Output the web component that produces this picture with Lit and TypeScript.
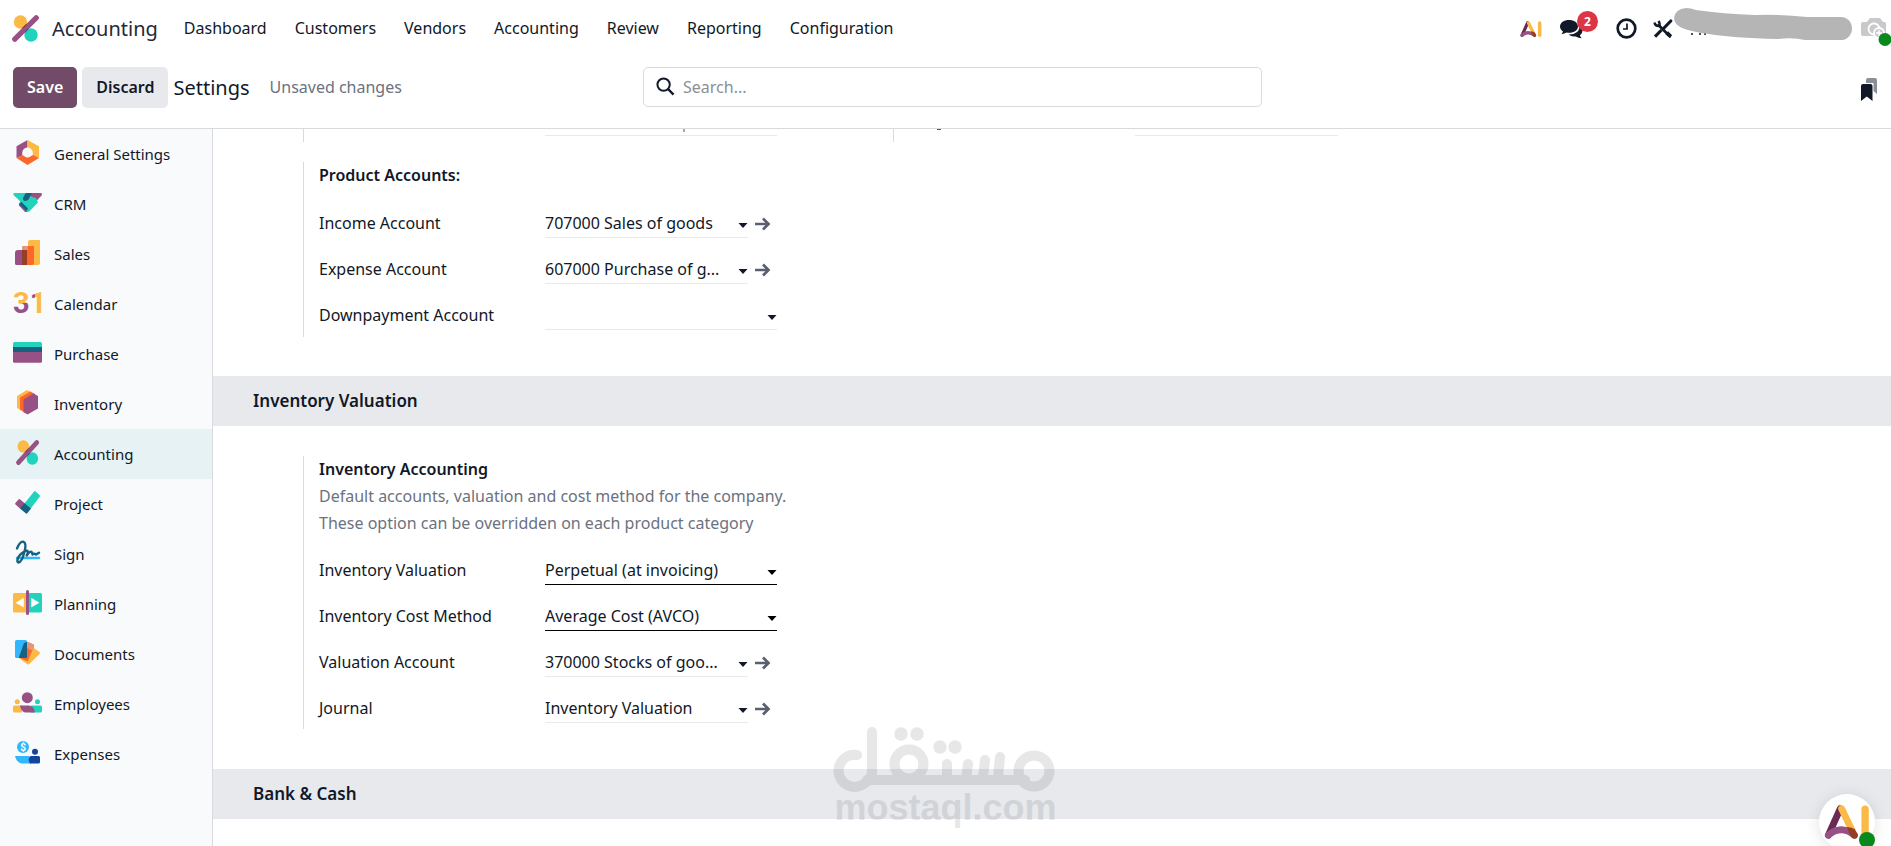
import { LitElement, html, css, svg } from "lit";
import { customElement } from "lit/decorators.js";

const percent = svg`
  <circle cx="8.5" cy="7" r="6.7" fill="#fbb945"/>
  <circle cx="19" cy="20" r="6.7" fill="#21d3bc"/>
  <path d="M2.8 24.2 24.2 2.8" stroke="#985184" stroke-width="5.3" stroke-linecap="round"/>
  <path d="M9.6 13.6 13.6 9.6 14.8 8.8 Q14 12 11.5 13Z" fill="#8c3b2c"/>
  <path d="M12.6 18.2 17 13.6 Q13.5 14.5 12.6 18.2Z" fill="#17607f"/>`;

const aiMark = svg`
  <path d="M3.500 31 15.500 4" stroke="#6a2a55" stroke-width="7" stroke-linecap="round"/>
  <path d="M17 4 30 31" stroke="#fbb945" stroke-width="7" stroke-linecap="round"/>
  <path d="M3.500 31 Q16.500 20 30 31" stroke="#985184" stroke-width="7" stroke-linecap="round" fill="none"/>
  <path d="M22.500 22.500 Q28 23 30.500 25 L33.400 30.500 Q33.500 35 29.500 34.400 Q27 34 25.500 31Z" fill="#953f27"/>
  <path d="M41 4.500V31" stroke="#fbb945" stroke-width="7.500" stroke-linecap="round"/>`;

const apps = [
  { name: "General Settings", art: svg`
    <path d="M14.500 2 3.500 8.200V20L9 17.500 10 12 14.500 10Z" fill="#985184"/>
    <path d="M14.500 2 26 8.200V20L20 17.500 19 12 14.500 10Z" fill="#fbb945"/>
    <path d="M3.500 20 9.500 17 14.500 19.500 20 17 26 20 14.500 27Z" fill="#fc6829"/>
    <circle cx="14.500" cy="14.500" r="5" fill="#f9fafc"/>` },
  { name: "CRM", art: svg`
    <path d="M2 5H17L9 15 1 7.500Q-.8 5 2 5Z" fill="#21d3bc"/>
    <path d="M14 5H27.500Q30 5.500 28.500 7.500L23 13.500Z" fill="#985184"/>
    <path d="M7 14 15 24H12L6 17.500Q5.500 15.500 7 14Z" fill="#985184"/>
    <path d="M16 8 23 10 25 14.500 16.500 23.200Q15 24.500 13.500 23L7 16.500 8 12Z" fill="#21d3bc"/>
    <path d="M8 13.500 15 20.500 13.500 23 6.500 16.500ZM13 5H19L15.500 11.500Q11.500 14.500 10 11.500Q9.500 9.500 13 5Z" fill="#17607f"/>` },
  { name: "Sales", art: svg`
    <path d="M15 4Q15 2 17 2H27V25Q27 27 25 27H15Z" fill="#fbb945"/>
    <path d="M2 15Q2 12 5 12H14V27H3.500Q2 27 2 25.500Z" fill="#985184"/>
    <path d="M9 10Q9 8 11 8H21V25Q21 27 19 27H9Z" fill="#fc6829"/>
    <path d="M9 10Q9 8 11 8H15V12H9Z" fill="#e2977c"/>
    <path d="M9 12H14V27H9Z" fill="#953f27"/>` },
  { name: "Calendar", art: svg`
    <defs>
      <pattern id="date" patternUnits="userSpaceOnUse" x="0" y="0" width="34" height="34">
        <rect width="34" height="34" fill="#fbb945"/>
        <rect y="15" width="16.500" height="19" fill="#985184"/>
        <rect x="16.500" width="5.500" height="34" fill="#985184"/>
      </pattern>
    </defs>
    <text class="digits" x="0" y="25" fill="url(#date)">31</text>` },
  { name: "Purchase", art: svg`
    <path d="M0 9V5.500Q0 4 1.500 4H27.500Q29 4 29 5.500V9Z" fill="#21d3bc"/>
    <path d="M0 9H29V14H0Z" fill="#17607f"/>
    <path d="M0 14H29V23.500Q29 24.700 27.500 24.700H1.500Q0 24.700 0 23.500Z" fill="#985184"/>` },
  { name: "Inventory", art: svg`
    <path d="M14 2 4 8V20L8 22.500 18 7V4Z" fill="#fbb945"/>
    <path d="M17.500 3.500 7 9.500V21.500L12 25 22 10V6Z" fill="#fc6829"/>
    <path d="M25 8 20.500 5.500 10.500 11.500V24L14.500 26.500 25 20.500Z" fill="#985184"/>` },
  { name: "Accounting", art: svg`<g transform="translate(3 2) scale(.86 .93)">${percent}</g>` },
  { name: "Project", art: svg`
    <path d="M21.300 3.300Q22 2.800 22.700 3.500L26.700 7.300Q27.300 8 26.700 8.800L17 21.500 11 16Z" fill="#21d3bc"/>
    <path d="M2.400 15 5.500 11.500Q6.300 10.600 7.200 11.500L12 15.500 7.500 21 2.500 16.500Q1.800 15.800 2.400 15Z" fill="#985184"/>
    <path d="M11.500 15.200 18 20.500 14.300 25.200Q13.500 26 12.700 25.300L7 20.500Z" fill="#17607f"/>` },
  { name: "Sign", art: svg`
    <path d="M4 20H26" stroke="#31b7fd" stroke-width="2.500" stroke-linecap="round"/>
    <path d="M4 10.500Q7 3.200 10 3.700Q14 5 11.500 13.500Q9 24 5.500 24.500Q3.200 24 5.500 19Q9 14 13.500 12.700Q15.500 12.500 14.500 15.500L13.700 17.500Q17.500 12 19 14.500L19.500 16.500Q21 15 23 16.500L26 14.700" fill="none" stroke="#17607f" stroke-width="2.400" stroke-linecap="round" stroke-linejoin="round"/>` },
  { name: "Planning", art: svg`
    <rect x="0" y="5" width="14" height="19.500" rx="1.500" fill="#fbb945"/>
    <rect x="15" y="5" width="14" height="19.500" rx="1.500" fill="#21d3bc"/>
    <rect x="13" y="2" width="3" height="25" rx="1.500" fill="#985184"/>
    <path d="M3 14.700 10.500 10.300V19ZM26 14.700 18.500 10.300V19Z" fill="#fff" stroke="#fff" stroke-width=".5" stroke-linejoin="round"/>` },
  { name: "Documents", art: svg`
    <path d="M18 8 26.500 14Q27.500 15 26.500 16L16 26.200Q15 27 14 26L6 20Z" fill="#fbb945"/>
    <path d="M9 4.500Q10 2.500 12 3L20.500 6.500Q21.500 7 21 8.500L15 22.500Q14.500 23.500 13.500 23L6 19.500Z" fill="#fc6829"/>
    <path d="M14 3.500 20.500 6.500Q21.500 7 21 8.500L19 12.500 12 9Z" fill="#e2977c"/>
    <path d="M3.500 2H12.500Q14 2 14 3.500V8L9 20H3.500Q2 20 2 18.500V3.500Q2 2 3.500 2Z" fill="#31b7fd"/>
    <path d="M14 4V18.500Q14 20 12.500 20H6L6 19 11 5Z" fill="#17607f"/>` },
  { name: "Employees", art: svg`
    <circle cx="14.300" cy="9.700" r="5.500" fill="#985184"/>
    <circle cx="4.300" cy="13.700" r="2.500" fill="#fbb945"/>
    <circle cx="24.500" cy="13.700" r="2.500" fill="#21d3bc"/>
    <path d="M1.500 17.500H9V24.500H1.500Q0 24.500 0 23V19Q0 17.500 1.500 17.500Z" fill="#fbb945"/>
    <path d="M18 17.500H27.500Q29 17.500 29 19V23Q29 24.500 27.500 24.500H18Z" fill="#21d3bc"/>
    <path d="M7 17.500H16Q21 18 22 24.500H12Q8 23.500 7 17.500Z" fill="#985184"/>` },
  { name: "Expenses", art: svg`
    <circle cx="10" cy="9" r="6" fill="#31b7fd"/>
    <text class="coin" x="10" y="12.500" text-anchor="middle" fill="#fff">$</text>
    <circle cx="22" cy="13.700" r="3" fill="#14459b"/>
    <path d="M2 18H16L18 25.500H9Q3.500 25 2 18Z" fill="#31b7fd"/>
    <path d="M18 18H25.500Q27 18 27 19.500V24Q27 25.500 25.500 25.500H17Q15 22 16 20Q16.500 18 18 18Z" fill="#14459b"/>` },
];

const menus = ["Dashboard", "Customers", "Vendors", "Accounting", "Review", "Reporting", "Configuration"];

type Field = { id: string; label: string; value: string; kind: "record" | "empty" | "choice" };

const productAccounts: Field[] = [
  { id: "income", label: "Income Account", value: "707000 Sales of goods", kind: "record" },
  { id: "expense", label: "Expense Account", value: "607000 Purchase of g...", kind: "record" },
  { id: "downpayment", label: "Downpayment Account", value: "", kind: "empty" },
];

const inventoryFields: Field[] = [
  { id: "valuation", label: "Inventory Valuation", value: "Perpetual (at invoicing)", kind: "choice" },
  { id: "cost", label: "Inventory Cost Method", value: "Average Cost (AVCO)", kind: "choice" },
  { id: "account", label: "Valuation Account", value: "370000 Stocks of goo...", kind: "record" },
  { id: "journal", label: "Journal", value: "Inventory Valuation", kind: "record" },
];

@customElement("app-root")
export class AppRoot extends LitElement {
  static styles = css`
    :host {
      display: flex;
      flex-direction: column;
      position: relative;
      height: 100vh;
      overflow: hidden;
      background: #fff;
      color: #111827;
      font: 16px/27px "Noto Sans", "Open Sans", sans-serif;
    }
    * { box-sizing: border-box; }
    svg { display: block; flex: none; overflow: visible; }
    a { color: inherit; text-decoration: none; }
    button, input, select { font: inherit; color: inherit; margin: 0; }
    .navbar { display: flex; align-items: center; height: 57px; padding: 0 0 0 12px; flex: none; }
    .brand { display: flex; align-items: center; gap: 13px; font-size: 20px; color: #1f2937; }
    .menu { display: flex; gap: 28px; margin-left: 26px; }
    .systray { display: flex; align-items: center; margin-left: auto; height: 57px; }
    .tray { border: 0; background: none; padding: 0; display: flex; position: relative; }
    .tray-ai { margin-right: 18px; }
    .tray-chat { margin-right: 33px; }
    .tray-clock { margin-right: 16px; }
    .badge {
      position: absolute; left: 17px; top: -8px; width: 21px; height: 21px; border-radius: 50%;
      background: #dc3545; color: #fff; font-size: 12px; line-height: 21px; font-weight: 700; text-align: center;
    }
    .panel {
      display: grid; grid-template-columns: 630fr 619fr 616fr; align-items: start;
      padding: 10px 13px 0; height: 72px; border-bottom: 1px solid #d8dadd; flex: none;
    }
    .actions { display: flex; align-items: center; gap: 5px; }
    .btn { height: 41px; padding: 0 14px; border: 0; border-radius: 5px; font-weight: 600; }
    .primary { background: #714b67; color: #fff; }
    .secondary { background: #e7e9ed; }
    .title { font-size: 20px; }
    .status { color: #6b7280; margin-left: 15px; }
    .search { display: flex; align-items: center; gap: 8px; height: 40px; border: 1px solid #d8dadd; border-radius: 5px; padding: 0 12px; }
    .search svg { margin-bottom: 2px; }
    .search input { border: 0; outline: 0; flex: 1; min-width: 0; padding: 0; background: none; }
    .search input::placeholder { color: #8a9096; opacity: 1; }
    .bookmark { border: 0; background: none; padding: 0; justify-self: end; margin-top: 10px; }
    .body { display: flex; flex: 1; min-height: 0; }
    .sidebar { width: 213px; flex: none; background: #f9fafc; border-right: 1px solid #d8dadd; overflow: hidden; }
    .app { display: flex; align-items: center; gap: 11px; height: 50px; padding-left: 13px; font-size: 15px; }
    .app svg { margin-bottom: 2px; }
    .app.active { background: #e6f2f3; }
    .digits { font: 700 29px Roboto, sans-serif; }
    .coin { font: 700 10px Roboto, sans-serif; }
    .main { flex: 1; min-width: 0; overflow: hidden; }
    .columns { display: grid; grid-template-columns: 590px 1fr; padding-left: 90px; }
    .tail { display: grid; grid-template-columns: 226px 232px; align-items: start; height: 13px; padding-left: 15px; border-left: 1px solid #d8dadd; }
    .tail.narrow { grid-template-columns: 226px 203px; }
    .mark { grid-column: 2; grid-row: 1; justify-self: start; width: 2px; height: 3px; background: #a3abb5; margin-left: 138px; }
    .dash { justify-self: start; width: 4px; height: 1px; background: #4b5563; margin-left: 28px; }
    .line { grid-column: 2; grid-row: 1; height: 7px; border-bottom: 1px solid #e7e9ed; }
    .box { margin-left: 90px; padding-left: 15px; border-left: 1px solid #d8dadd; width: 520px; }
    .product { margin-top: 20px; margin-bottom: 39px; padding-bottom: 7px; }
    .inventory { margin-top: 30px; margin-bottom: 40px; padding-bottom: 6px; }
    h2, h3, p { margin: 0; }
    h3 { font-size: 16px; line-height: 27px; font-weight: 600; }
    .product h3 { margin-bottom: 3px; }
    .help { color: #6b7280; margin-bottom: 2px; }
    .section { background: #e7e9ed; height: 50px; padding-left: 40px; font-size: 17px; line-height: 50px; font-weight: 600; }
    .row { display: grid; grid-template-columns: 226px 232px; height: 46px; align-content: end; align-items: center; }
    .control { display: flex; align-items: center; gap: 7px; height: 29px; }
    .field { position: relative; display: flex; flex: 1; min-width: 0; height: 29px; border-bottom: 1px solid #e7e9ed; }
    .field.choice { border-bottom-color: #000; }
    .field input, .field select {
      flex: 1; min-width: 0; border: 0; outline: 0; padding: 0 24px 0 0; background: none; appearance: none; border-radius: 0;
    }
    .caret { position: absolute; right: 0; bottom: 9px; pointer-events: none; }
    .go { border: 0; background: none; padding: 0 7px 0 0; }
    .watermark { position: absolute; left: 50%; bottom: 20px; margin-left: -111px; width: 222px; opacity: .09; pointer-events: none; color: #000; }
    .watermark-name { font: 700 36px/36px "Liberation Sans", sans-serif; margin-top: -3px; }
    .assistant {
      position: absolute; right: 16px; bottom: -4px; width: 56px; height: 56px; border: 0; padding: 0; border-radius: 50%;
      background: #fff; box-shadow: 0 2px 16px rgba(0, 0, 0, .12); display: flex; justify-content: center; align-items: center;
    }
    .online { position: absolute; right: 0; bottom: 2px; width: 16px; height: 16px; border-radius: 50%; background: #08891c; }
  `;

  private field(f: Field) {
    const caret = html`<svg class="caret" width="10" height="5" viewBox="0 0 10 5" aria-hidden="true"><path d="M.5 0H9.500L5 5Z" fill="${f.kind === "choice" ? "#000" : "#111827"}"/></svg>`;
    return html`
      <div class="row">
        <label for=${f.id}>${f.label}</label>
        <div class="control">
          <div class="field ${f.kind}">
            ${f.kind === "choice"
              ? html`<select id=${f.id}><option>${f.value}</option></select>`
              : html`<input id=${f.id} type="text" .value=${f.value} />`}
            ${caret}
          </div>
          ${f.kind === "record"
            ? html`<button class="go" aria-label="Open ${f.label}">
                <svg width="15" height="14" viewBox="0 0 15 14"><path d="M0 7H13.500M8 1.500 13.500 7 8 12.500" fill="none" stroke="#5a6070" stroke-width="2.700"/></svg>
              </button>`
            : ""}
        </div>
      </div>`;
  }

  render() {
    return html`
      <header class="navbar">
        <a class="brand" href="#"><svg width="27" height="27" viewBox="0 0 27 27">${percent}</svg><span>Accounting</span></a>
        <nav class="menu">${menus.map((m) => html`<a href="#">${m}</a>`)}</nav>
        <div class="systray">
          <button class="tray tray-ai" aria-label="AI"><svg width="22" height="18" viewBox="-1 -1 47 37" fill="none">${aiMark}</svg></button>
          <button class="tray tray-chat" aria-label="Messages">
            <svg width="23" height="20" viewBox="0 0 23 20" fill="#111827">
              <path d="M9 1C4 1 0 3.700 0 7.500 0 9.500 1.200 11.300 3 12.500Q2.500 14 1.300 15.200 4.500 15 6.500 13.600C13 14.600 18 11.700 18 7.500 18 3.700 14 1 9 1Z"/>
              <path d="M19.500 6.500Q20 12.500 14 14.700 11.500 15.700 8.500 15.500 11 18 15.700 17.500 18.500 19.200 21.700 19.200 20.200 18 20 16.300 22.500 14.500 22.500 11.700 22.500 8.500 19.500 6.500Z"/>
            </svg>
            <span class="badge">2</span>
          </button>
          <button class="tray tray-clock" aria-label="Activities">
            <svg width="21" height="21" viewBox="0 0 21 21" fill="none" stroke="#111827"><circle cx="10.500" cy="10.500" r="8.800" stroke-width="2.700"/><path d="M11 5.500V11H7" stroke-width="1.700"/></svg>
          </button>
          <button class="tray" aria-label="Developer tools">
            <svg width="20" height="20" viewBox="0 0 20 20" fill="none" stroke="#111827">
              <path d="M5 5.500 16 16.500" stroke-width="2.600"/><path d="M1.500 3.500Q2 7 6 7 7.500 5 5.500 2" stroke-width="2.400"/>
              <path d="M13 14.500 17.500 18.500M14.500 13 18.500 17" stroke-width="1.800"/>
              <path d="M17.800 2 11 9" stroke-width="3.200" stroke-linecap="round"/><path d="M8.500 11 2 17.700" stroke-width="3.200"/>
            </svg>
          </button>
          <svg width="218" height="57" viewBox="0 0 218 57" aria-hidden="true">
            <path d="M19 33V35M27 33V35M32 33V35" stroke="#111827" stroke-width="1.500"/>
            <path d="M13 8Q18 8 23 10Q50 14 82 15Q105 14 134 17H168A11 11.500 0 0 1 168 40H132Q120 37 104 39Q60 38 36 34Q20 32 9 28Q1 24 1 18Q2 9 13 8Z" fill="#b5b5b5"/>
            <path d="M190 22H194L197 18H207L210 22H212Q213 22 213 24V36H190Q188 36 188 34V24Q188 22 190 22Z" fill="#c9c9cb"/>
            <circle cx="201" cy="29" r="5.500" fill="none" stroke="#fff" stroke-width="1.800"/>
            <circle cx="206" cy="33" r="5" fill="#c9c9cb" stroke="#fff" stroke-width="1.800"/>
            <path d="M206 30V36M203 33H209" stroke="#fff" stroke-width="1.300"/>
            <circle cx="212" cy="39.500" r="6.500" fill="#08891c"/>
          </svg>
        </div>
      </header>
      <div class="panel">
        <div class="actions">
          <button class="btn primary">Save</button>
          <button class="btn secondary">Discard</button>
          <span class="title">Settings</span>
          <span class="status">Unsaved changes</span>
        </div>
        <div class="search">
          <svg width="19" height="19" viewBox="0 0 20 20" fill="none" stroke="#111827"><circle cx="8" cy="8" r="6.500" stroke-width="2.100"/><path d="M12.500 12.500 18.500 18.500" stroke-width="2.400"/></svg>
          <input type="search" aria-label="Search" placeholder="Search..." />
        </div>
        <button class="bookmark" aria-label="Bookmarks">
          <svg width="17" height="25" viewBox="0 0 17 25"><path d="M5 3Q5 1 7 1H14Q16 1 16 3V17L12.500 14V6H5Z" fill="#8b8f9a"/><path d="M0 9Q0 7 2 7H9.500Q11.500 7 11.500 9V24L5.800 19.500 0 24Z" fill="#111827"/></svg>
        </button>
      </div>
      <div class="body">
        <nav class="sidebar">
          ${apps.map((a) => html`<a href="#" class="app ${a.name === "Accounting" ? "active" : ""}">
            <svg width="30" height="30" viewBox="0 0 30 30" fill="none" aria-hidden="true">${a.art}</svg><span>${a.name}</span></a>`)}
        </nav>
        <main class="main">
          <div class="columns">
            <div class="tail"><span class="line"></span><span class="mark"></span></div>
            <div class="tail narrow"><span class="dash"></span><span class="line"></span></div>
          </div>
          <section class="box product">
            <h3>Product Accounts:</h3>
            ${productAccounts.map((f) => this.field(f))}
          </section>
          <h2 class="section">Inventory Valuation</h2>
          <section class="box inventory">
            <h3>Inventory Accounting</h3>
            <p class="help">Default accounts, valuation and cost method for the company.<br />These option can be overridden on each product category</p>
            ${inventoryFields.map((f) => this.field(f))}
          </section>
          <h2 class="section">Bank &amp; Cash</h2>
        </main>
      </div>
      <div class="watermark">
        <svg width="222" height="66" viewBox="0 0 222 66" fill="none" stroke="#000" stroke-width="10" stroke-linecap="round" aria-hidden="true">
          <path d="M22 28A16 16 0 1 0 30 56Q37 53 37 44V5M37 53H190"/>
          <circle cx="74" cy="37" r="14.500"/><circle cx="199" cy="44" r="15.500"/>
          <path d="M112 52V37M131 52 133 37M148 50 150 33M163 50 165 30M37 44Q37 52 32 53"/>
          <g fill="#000" stroke="none"><circle cx="66" cy="7" r="6.700"/><circle cx="82" cy="7" r="6.700"/><circle cx="105" cy="20" r="6.700"/><circle cx="120" cy="20" r="6.700"/></g>
        </svg>
        <div class="watermark-name">mostaql.com</div>
      </div>
      <button class="assistant" aria-label="Ask AI">
        <svg width="46" height="38" viewBox="-1 -1 47 37" fill="none">${aiMark}</svg>
        <span class="online"></span>
      </button>
    `;
  }
}
